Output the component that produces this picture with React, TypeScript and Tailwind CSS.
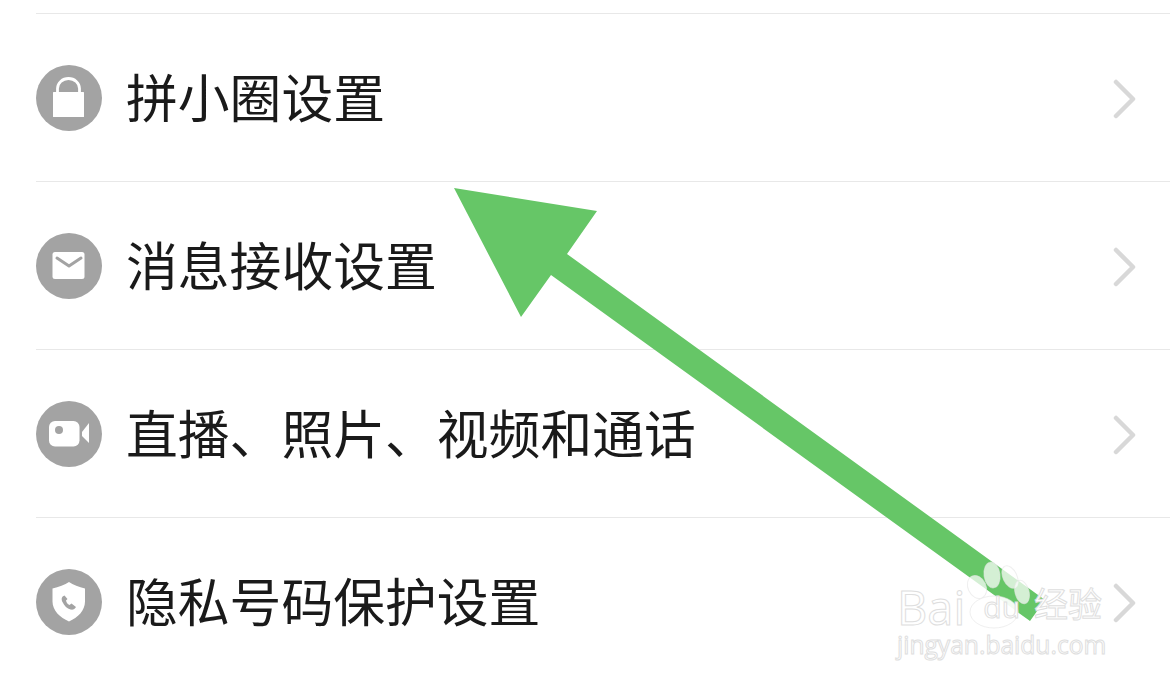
const cjk = "font-['Noto_Sans_CJK_SC','Noto_Sans',sans-serif]"
const mark = "text-white [-webkit-text-stroke:1px_#dedede] leading-none"

function IconCircle({ children }: { children: React.ReactNode }) {
	return (
		<svg width="66" height="66" viewBox="0 0 66 66" className="shrink-0">
			<circle cx="33" cy="33" r="33" fill="#a3a3a3" />
			{children}
		</svg>
	)
}

function LockIcon() {
	return (
		<IconCircle>
			<path d="M21.5 28v-4.500a11 10 0 0 1 22 0V28" fill="none" stroke="#fff" strokeWidth="2.800" />
			<rect x="17" y="27" width="31" height="25" rx="0.500" fill="#fff" />
		</IconCircle>
	)
}

function MailIcon() {
	return (
		<IconCircle>
			<rect x="16.500" y="19" width="32" height="27" rx="2.500" fill="#fff" />
			<path d="M21 25l12 8 12-8" fill="none" stroke="#a3a3a3" strokeWidth="3" strokeLinecap="round" strokeLinejoin="round" />
		</IconCircle>
	)
}

function VideoIcon() {
	return (
		<IconCircle>
			<rect x="13" y="20" width="30.500" height="25.500" rx="6" fill="#fff" />
			<circle cx="23" cy="29" r="4" fill="#a3a3a3" />
			<path d="M46 31l7-9v20l-7-7z" fill="#fff" />
		</IconCircle>
	)
}

function ShieldIcon() {
	return (
		<IconCircle>
			<path d="M33 13c4 3 10 5 16 6.500v13c0 9-7 16-16 20-9-4-16.500-11-16.500-20v-13c6-1.500 12.500-3.500 16.500-6.500z" fill="#fff" />
			<path d="M28.500 26.500c-3 1-3.500 3.500-2 6.500 2 4 4.500 6.500 8 7.500 2.500 .5 4.500-.5 5.500-2.500l-4.500-3.500-2 1.500c-2-1-3-2.500-3.500-4.500l1.500-1.500z" fill="#a3a3a3" />
		</IconCircle>
	)
}

function Chevron() {
	return (
		<svg width="24" height="40" viewBox="0 0 24 40" className="shrink-0 mt-[2px]">
			<path d="M3 3l17 17-17 17" fill="none" stroke="#d8d8d8" strokeWidth="4.500" strokeLinecap="round" strokeLinejoin="round" />
		</svg>
	)
}

const rows = [
	{ label: '拼小圈设置', icon: <LockIcon /> },
	{ label: '消息接收设置', icon: <MailIcon /> },
	{ label: '直播、照片、视频和通话', icon: <VideoIcon /> },
	{ label: '隐私号码保护设置', icon: <ShieldIcon /> },
]

export default function App() {
	return (
		<div className={`relative w-[1170px] h-[686px] overflow-hidden bg-white pt-[13px] pl-9 ${cjk}`}>
			{rows.map((row) => (
				<div key={row.label} className="h-[168px] border-t border-[#e8e8e8] flex items-center gap-6 pr-[33px]">
					{row.icon}
					<p className="flex-1 -mt-[3px] text-[51.8px] leading-none text-[#1a1a1a] whitespace-nowrap">{row.label}</p>
					<Chevron />
				</div>
			))}

			{/* green arrow drawn on top of the screenshot */}
			<svg width="1170" height="686" viewBox="0 0 1170 686" className="absolute left-0 top-0">
				<polygon points="454,188 597,211 567,254 1045,600 1030,621 551,275 521,317" fill="#66c667" />
				{/* paw of the watermark */}
				<g fill="#fff" fillOpacity="0.72" stroke="#e4e4e4" strokeOpacity="0.6">
					<ellipse cx="977" cy="587" rx="9" ry="12" transform="rotate(-25 977 587)" />
					<ellipse cx="992" cy="575" rx="8" ry="13" transform="rotate(-8 992 575)" />
					<ellipse cx="1010" cy="577" rx="7" ry="12" transform="rotate(-25 1010 577)" />
					<ellipse cx="1022" cy="592" rx="7" ry="12" transform="rotate(-15 1022 592)" />
					<ellipse cx="994" cy="612" rx="24" ry="16" fillOpacity="0.92" />
				</g>
			</svg>

			{/* baidu watermark */}
			<div className="absolute left-[897px] top-[584px] flex flex-col gap-[2px]">
				<div className="flex items-end">
					<span className={`${mark} font-['Open_Sans',sans-serif] text-[47px]`}>Bai</span>
					<span className={`${mark} font-['Open_Sans',sans-serif] text-[30px] ml-[18px] mb-[9px]`}>du</span>
					<span className={`${mark} ${cjk} text-[34px] ml-[14px] mb-[11px] whitespace-nowrap`}>经验</span>
				</div>
				<span className={`${mark} font-['Open_Sans',sans-serif] text-[24.6px] whitespace-nowrap`}>jingyan.baidu.com</span>
			</div>
		</div>
	)
}
